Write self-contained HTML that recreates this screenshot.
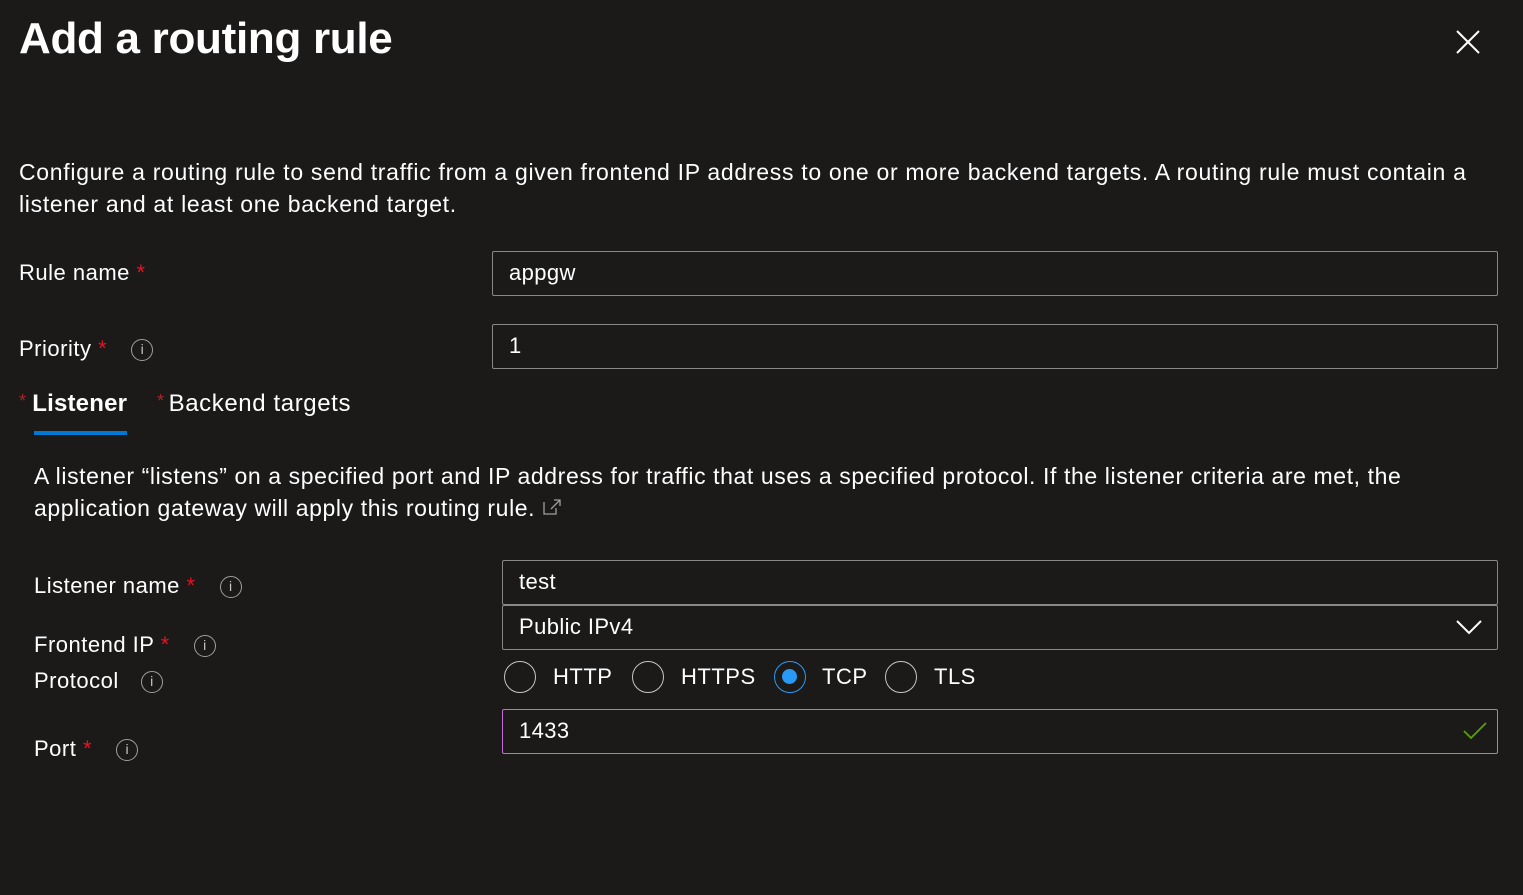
<!DOCTYPE html>
<html><head><meta charset="utf-8"><style>
body{margin:0;width:1523px;height:895px;background:#1b1a19;color:#fff;font-family:"Liberation Sans",sans-serif;position:relative;overflow:hidden}
.a{position:absolute;white-space:nowrap}
.t{font-size:22px;letter-spacing:0.5px}
.r{color:#e81123}
.box{position:absolute;border:1px solid #8a8886;border-radius:2px;box-sizing:border-box;font-size:22px;padding-left:16px;line-height:42px;letter-spacing:0.4px}
.info{display:inline-block;width:22px;height:22px;border:1.3px solid #a19f9d;border-radius:50%;box-sizing:border-box;font-size:14px;line-height:19px;text-align:center;color:#c8c6c4;vertical-align:middle;margin-left:24px;letter-spacing:0}
.rad{position:absolute;width:32px;height:32px;border:1.5px solid #c8c6c4;border-radius:50%;box-sizing:border-box}
.st{color:#a4262c;font-size:18px;vertical-align:4px;margin-right:6px}
</style></head><body>
<div class="a" style="left:19px;top:14px;font-size:44px;font-weight:600;letter-spacing:-0.3px">Add a routing rule</div>
<svg class="a" style="left:1456px;top:30px" width="24" height="24"><path d="M1 1L23 23M23 1L1 23" stroke="#fff" stroke-width="2"/></svg>
<div class="a" style="left:19px;top:156px;line-height:32px;font-size:23px;letter-spacing:0.7px">Configure a routing rule to send traffic from a given frontend IP address to one or more backend targets. A routing rule must contain a<br>listener and at least one backend target.</div>
<div class="a t" style="left:19px;top:260px">Rule name <span class="r">*</span></div>
<div class="box" style="left:492px;top:251px;width:1006px;height:45px">appgw</div>
<div class="a t" style="left:19px;top:336px">Priority <span class="r">*</span><span class="info">i</span></div>
<div class="box" style="left:492px;top:324px;width:1006px;height:45px">1</div>
<div class="a" style="left:19px;top:390px;font-size:24px;letter-spacing:0.2px"><span class="st">*</span><b style="font-weight:600">Listener</b></div>
<div class="a" style="left:34px;top:431px;width:93px;height:4px;background:#0078d4"></div>
<div class="a" style="left:157px;top:390px;font-size:24px;letter-spacing:0.6px"><span class="st" style="margin-right:4px">*</span>Backend targets</div>
<div class="a" style="left:34px;top:460px;line-height:32px;font-size:23px;letter-spacing:0.6px">A listener “listens” on a specified port and IP address for traffic that uses a specified protocol. If the listener criteria are met, the<br>application gateway will apply this routing rule. <svg width="20" height="18" style="vertical-align:0"><path d="M2 4v12h12v-6M9 11L18 2M12 2h6v6" stroke="#a19f9d" fill="none" stroke-width="1.3"/></svg></div>
<div class="a t" style="left:34px;top:573px">Listener name <span class="r">*</span><span class="info">i</span></div>
<div class="box" style="left:502px;top:560px;width:996px;height:45px">test</div>
<div class="a t" style="left:34px;top:632px">Frontend IP <span class="r">*</span><span class="info">i</span></div>
<div class="box" style="left:502px;top:605px;width:996px;height:45px">Public IPv4</div>
<svg class="a" style="left:1456px;top:619px" width="26" height="16"><path d="M1 2L13 14L25 2" stroke="#fff" stroke-width="2" fill="none"/></svg>
<div class="a t" style="left:34px;top:668px">Protocol<span class="info" style="margin-left:22px">i</span></div>
<div class="rad" style="left:504px;top:661px"></div><div class="a t" style="left:553px;top:664px">HTTP</div>
<div class="rad" style="left:632px;top:661px"></div><div class="a t" style="left:681px;top:664px">HTTPS</div>
<div class="rad" style="left:774px;top:661px;border-color:#2899f5"><div style="position:absolute;left:7px;top:7px;width:15px;height:15px;border-radius:50%;background:#2899f5"></div></div><div class="a t" style="left:822px;top:664px">TCP</div>
<div class="rad" style="left:885px;top:661px"></div><div class="a t" style="left:934px;top:664px">TLS</div>
<div class="a t" style="left:34px;top:736px">Port <span class="r">*</span><span class="info">i</span></div>
<div class="box" style="left:502px;top:709px;width:996px;height:45px;border-color:#c36bdb">1433</div>
<svg class="a" style="left:1463px;top:722px" width="24" height="18"><path d="M1 9L8 16L23 1" stroke="#57a300" stroke-width="1.8" fill="none"/></svg>
</body></html>
